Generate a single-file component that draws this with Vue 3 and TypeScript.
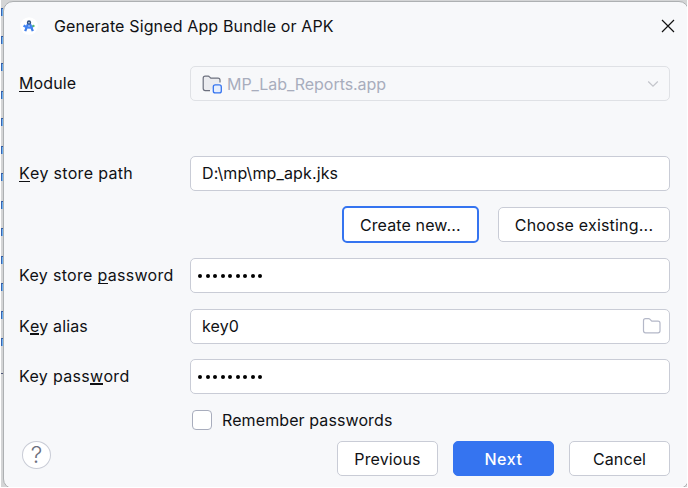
<script setup lang="ts">
import { ref } from 'vue'

const moduleName = ref('MP_Lab_Reports.app')
const storePath = ref('D:\\mp\\mp_apk.jks')
const keyAlias = ref('key0')
const passwordLength = 9
const editorLines = 13
</script>

<template>
  <div class="screen">
    <div class="editor">
      <i v-for="n in editorLines" :key="n" class="mark"></i>
      <i class="dash"></i>
    </div>
    <main class="dialog">
      <header class="titlebar">
        <svg class="logo" width="18" height="18" viewBox="0 0 18 18">
          <circle cx="9" cy="9" r="8.8" fill="#fff" />
          <path d="M9 4.5 5.2 14.2M9 4.5 12.8 14.2" stroke="#3f7de8" stroke-width="2.3" fill="none" />
          <path d="M3.6 8.5Q9 12.6 13 9.2" stroke="#4285f4" stroke-width="2.2" fill="none" />
          <circle cx="13.4" cy="8.9" r="1.2" fill="#5bb974" />
          <circle cx="9" cy="5.4" r="2.1" fill="#33517e" />
          <circle cx="9" cy="5.8" r=".8" fill="#cfe0f8" />
        </svg>
        <h1>Generate Signed App Bundle or APK</h1>
        <svg class="close" width="14" height="14" viewBox="0 0 14 14">
          <path d="M1 1 13 13M13 1 1 13" stroke="#111" stroke-width="1.2" />
        </svg>
      </header>

      <div class="row module">
        <label class="tight"><u>M</u>odule</label>
        <div class="field disabled">
          <svg class="folder-module" width="20" height="20" viewBox="0 0 20 20">
            <path d="M8 16.6H3.2Q1.2 16.6 1.2 14.6V4.2Q1.2 2.2 3.2 2.2H6.2Q7 2.2 7.5 2.8L8.8 4.2H16Q18 4.2 18 6.2V8.4" fill="#ebecf0" stroke="#6c707e" stroke-width="1.2" />
            <rect x="11.3" y="10.9" width="8" height="8" rx="2" fill="#e7effd" stroke="#3574f0" stroke-width="1.3" />
          </svg>
          <span class="module-name">{{ moduleName }}</span>
          <svg class="chevron" width="12" height="8" viewBox="0 0 12 8">
            <path d="m1.2 1.5 4.8 4.7 4.8-4.7" fill="none" stroke="#c3c5cb" stroke-width="1.2" />
          </svg>
        </div>
      </div>

      <div class="row path">
        <label><u>K</u>ey store path</label>
        <div class="field"><span class="path-text">{{ storePath }}</span></div>
      </div>

      <div class="store-actions">
        <button class="focused"><span>Create new...</span></button>
        <button class="choose"><span>Choose existing...</span></button>
      </div>

      <div class="row store-password">
        <label>Key store <u>p</u>assword</label>
        <div class="field secret"><i v-for="n in passwordLength" :key="n"></i></div>
      </div>
      <div class="row">
        <label class="tight">K<u class="thick">e</u>y alias</label>
        <div class="field alias">
          <span>{{ keyAlias }}</span>
          <svg class="folder" width="20" height="18" viewBox="0 0 20 18">
            <path d="M3.5 1.7H6.6Q7.3 1.7 7.8 2.2L9.8 4.2H16Q18 4.2 18 6.2V13.8Q18 15.8 16 15.8H3.5Q1.5 15.8 1.5 13.8V3.7Q1.5 1.7 3.5 1.7Z" fill="none" stroke="#b4b8c8" stroke-width="1.2" />
          </svg>
        </div>
      </div>
      <div class="row">
        <label>Key pass<u class="thick">w</u>ord</label>
        <div class="field secret"><i v-for="n in passwordLength" :key="n"></i></div>
      </div>

      <label class="remember"><i class="box"></i><span>Remember passwords</span></label>

      <footer>
        <div class="help">?</div>
        <button>Previous</button>
        <button class="primary">Next</button>
        <button>Cancel</button>
      </footer>
    </main>
  </div>
</template>

<style>
body { margin: 0; overflow: hidden; }
</style>

<style scoped>
* { box-sizing: border-box; }
.screen {
  width: 687px;
  height: 487px;
  display: flex;
  overflow: hidden;
  font: 16px/20px Inter, sans-serif;
  letter-spacing: .13px;
  color: #101114;
  background: #d4d5d6;
}
.editor {
  width: 3px;
  flex: none;
  border-left: 1px solid #fff;
  padding-top: 8px;
}
.mark {
  display: block;
  height: 8px;
  margin-bottom: 19.5px;
  background: #6fb4f0;
  border-top: 1px solid #315a9f;
  border-left: 1px solid #3a65b2;
}
.dash { display: block; height: 1px; margin-top: 8px; position: relative; top: 7px; background: #4c5578; }
.dialog {
  width: 686px;
  height: 488px;
  flex: none;
  margin-top: 1px;
  padding: 0 18px 0 15px;
  border: 1px solid #adb0b2;
  border-radius: 10px;
  background: #f7f8fa;
}
.titlebar { display: flex; align-items: center; height: 48px; }
.logo { margin-left: 1px; }
h1 { margin: 0 0 0 16px; font-size: 16px; font-weight: 400; letter-spacing: .14px; }
.close { margin-left: auto; margin-right: -5px; }
.row { display: flex; height: 35px; margin-bottom: 15px; align-items: center; }
.row > label { width: 171px; flex: none; white-space: nowrap; letter-spacing: .32px; padding-bottom: 2px; }
.row > .tight { letter-spacing: .13px; }
u { text-decoration: none; box-shadow: 0 1px #101114; display: inline-block; height: 18px; line-height: 20px; }
.thick { box-shadow: 0 2px #101114; height: 17px; }
.field {
  flex: 1;
  height: 35px;
  display: flex;
  align-items: center;
  padding: 0 8px 0 11px;
  border: 1px solid #c9ccd6;
  border-radius: 5px;
  background: #fff;
}
.module { margin-top: 16px; margin-bottom: 55px; }
.disabled { background: #f7f8fa; border-color: #dfe1e5; color: #a8adbd; letter-spacing: -.05px; }
.module-name { margin-left: 5px; }
.chevron { margin-left: auto; margin-right: 2px; }
.alias { padding-right: 7px; padding-bottom: 2px; }
.folder { margin-left: auto; }
.path-text { margin-top: -1px; }
.store-actions {
  display: flex;
  justify-content: flex-end;
  align-items: center;
  gap: 19px;
  height: 37px;
  margin-bottom: 15px;
}
button {
  width: 101px;
  height: 35px;
  padding: 0;
  font: inherit;
  letter-spacing: inherit;
  color: inherit;
  background: #fff;
  border: 1px solid #c9ccd6;
  border-radius: 5px;
}
.focused { width: 137.5px; height: 37px; border: 2px solid #3574f0; }
.choose { width: 172px; letter-spacing: .2px; }
.store-password { margin-bottom: 16px; }
.secret { padding-left: 7px; gap: 3.5px; }
.secret i { width: 4px; height: 4px; border-radius: 50%; background: #000; margin-top: 1px; }
.remember { display: flex; align-items: center; height: 20px; margin: 16px 0 11px 173px; letter-spacing: .1px; }
.box { width: 20px; height: 20px; margin-right: 10px; border: 1px solid #a8adbd; border-radius: 4px; background: #fff; }
footer { display: flex; align-items: flex-start; gap: 15px; }
.help {
  width: 29px;
  height: 28px;
  margin-left: 3px;
  margin-right: auto;
  border: 1px solid #c9ccd6;
  border-radius: 50%;
  background: #fff;
  color: #6c707e;
  font-size: 23px;
  font-weight: 300;
  line-height: 26px;
  text-align: center;
}
.primary { background: #3574f0; border-color: #3574f0; color: #fff; font-weight: 500; letter-spacing: .6px; }
</style>
